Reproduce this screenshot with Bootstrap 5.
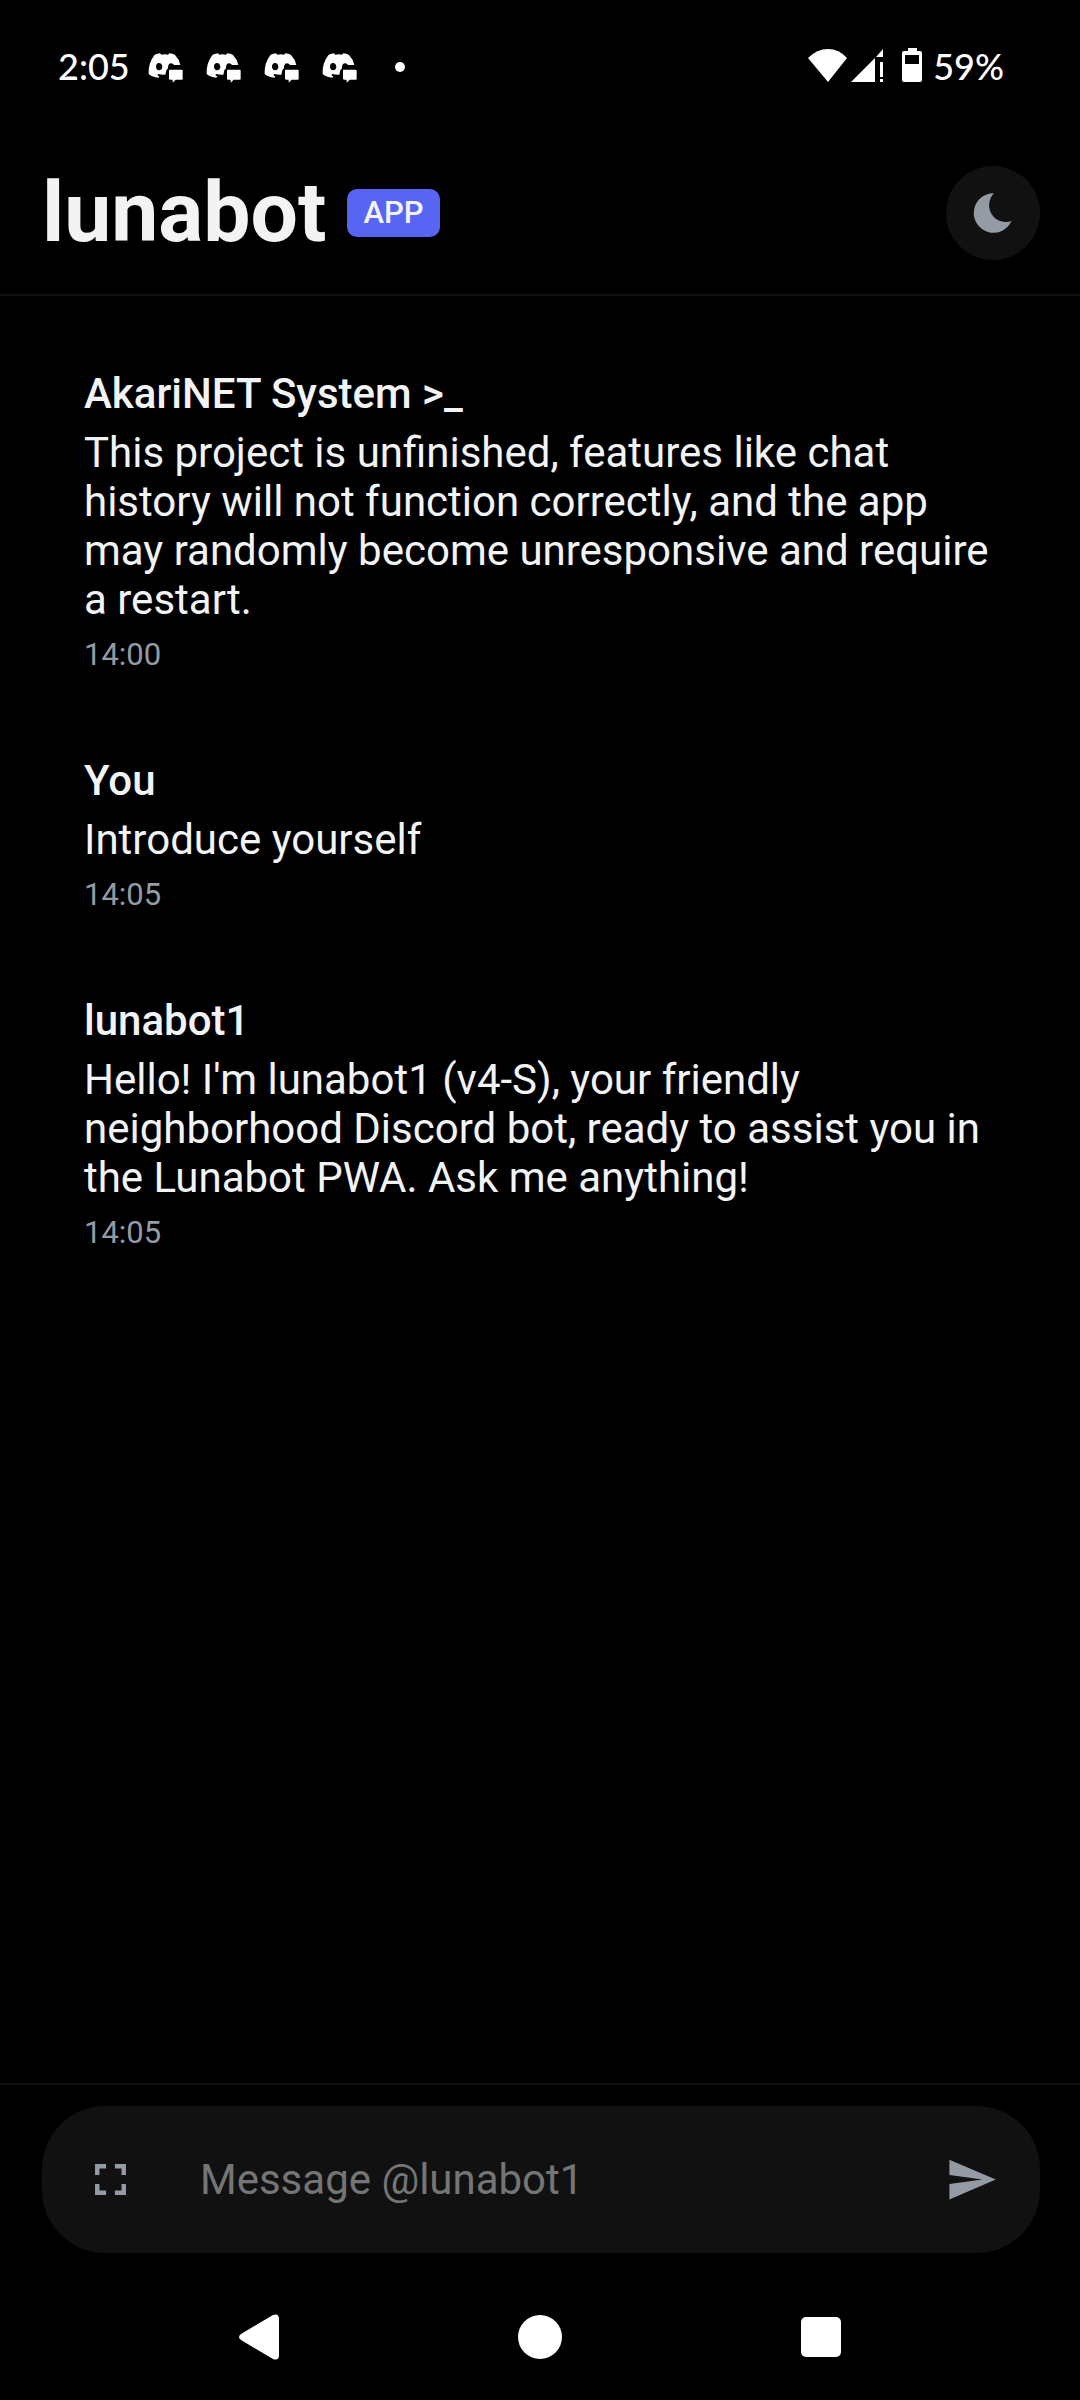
<!DOCTYPE html>
<html lang="en">
<head>
<meta charset="utf-8">
<meta name="viewport" content="width=device-width, initial-scale=1">
<title>lunabot</title>
<link href="https://cdn.jsdelivr.net/npm/bootstrap@5.3.0/dist/css/bootstrap.min.css" rel="stylesheet">
<style>
  body { background: #000; color: #f2f3f5; font-family: Roboto, sans-serif; font-size: 42px; line-height: 49px; }
  svg { display: block; fill: currentColor; }
  .status-bar { height: 132px; padding: 0 76px 0 58px; color: #fff; font-family: Lato, sans-serif; font-size: 36px; line-height: 44px; font-weight: 500; }
  .notices { gap: 23px; margin-left: 18px; }
  .app-header { padding: 32px 40px 32px 42px; border-bottom: 2px solid #111; }
  .app-title { font-size: 84px; line-height: 98px; font-weight: 700; }
  .app-tag { background: #5865f2; color: #f2f3f5; font-size: 31px; line-height: 48px; font-weight: 500; padding: 0 16px; border-radius: 10px; margin-left: 21px; }
  .plain-btn { background: none; border: 0; padding: 0; color: #949ba4; }
  .theme-btn { background: #111; width: 94px; height: 94px; }
  .chat-log { padding: 73px 84px; gap: 83px; }
  .sender { font-size: 42px; line-height: 49px; font-weight: 500; margin-bottom: 10px; }
  .stamp { font-size: 31px; line-height: 37px; color: #949ba4; margin-top: 12px; }
  .app-footer { padding: 21px 40px 21px 42px; border-top: 2px solid #111; }
  .composer { background: #111; border-radius: 63px; height: 147px; padding: 0 42px 1px; }
  .composer-input { background: none; border: 0; outline: 0; color: #f2f3f5; padding: 0; margin: 0 63px; min-width: 0; line-height: 49px; }
  .composer-input::placeholder { color: #757575; opacity: 1; }
  .system-nav { height: 126px; gap: 236px; }
  .system-nav .plain-btn { color: #fff; }
</style>
</head>
<body class="d-flex flex-column min-vh-100">
<svg class="d-none" aria-hidden="true">
  <symbol id="discord" viewBox="0 -12 105 102">
    <path fill-rule="evenodd" d="M20 5 Q28 2 36 1 L40 5 Q50 3 60 5 L64 1 Q74 2 81 6 Q93 18 97 36 L78 36 Q75 31 69 31 Q61 32 60 42 L60 46 L55 52 L52 65 Q42 66 31 63 L28 66 L34 71 L31 74 Q13 73 2 63 Q0 30 20 5 Z M33 30 Q24 31 24 41 Q25 51 33 52 Q43 51 43 41 Q42 31 33 30 Z"/>
    <path d="M64 50 H101 Q104 50 104 53 V77 Q104 80 101 80 H83 L74 89 V80 H67 Q63 80 63 77 V53 Q63 50 64 50 Z"/>
  </symbol>
</svg>

<div class="status-bar d-flex align-items-center justify-content-between">
  <div class="d-flex align-items-center">
    <span>2:05</span>
    <div class="notices d-flex align-items-center">
      <svg width="35" height="34"><use href="#discord"/></svg>
      <svg width="35" height="34"><use href="#discord"/></svg>
      <svg width="35" height="34"><use href="#discord"/></svg>
      <svg width="35" height="34"><use href="#discord"/></svg>
      <svg width="35" height="12" viewBox="0 0 35 12"><circle cx="20" cy="7" r="5"/></svg>
    </div>
  </div>
  <div class="d-flex align-items-center">
    <svg width="117" height="36" viewBox="0 0 117 36">
      <path d="M0 10 Q9 1 20 1 T39 10 L20 34 Z"/>
      <path d="M43 34 L67 10 V34 Z M68 9 L75 1 V9 Z M72 14 H75 V29 H72 Z M72 31 H75 V34 H72 Z"/>
      <path fill-rule="evenodd" d="M100 0 H109 V3 H112 Q114 3 114 5 V32 Q114 34 112 34 H96 Q94 34 94 32 V5 Q94 3 96 3 H100 Z M97 7 V16 H111 V7 Z"/>
    </svg>
    <span class="ps-2">59%</span>
  </div>
</div>

<header class="app-header d-flex align-items-center">
  <h1 class="app-title mb-0">lunabot</h1>
  <span class="app-tag">APP</span>
  <button type="button" class="plain-btn theme-btn rounded-circle ms-auto" aria-label="Toggle theme">
    <svg width="94" height="94" viewBox="0 0 94 94"><path d="M48 27.3 A19.7 19.7 0 1 0 65.5 55 A16.8 16.8 0 0 1 48 27.3 Z"/></svg>
  </button>
</header>

<main class="chat-log d-flex flex-column flex-grow-1">
  <article>
    <h2 class="sender">AkariNET System &gt;_</h2>
    <p class="mb-0">This project is unfinished, features like chat history will not function correctly, and the app may randomly become unresponsive and require a restart.</p>
    <time class="stamp d-block">14:00</time>
  </article>
  <article>
    <h2 class="sender">You</h2>
    <p class="mb-0">Introduce yourself</p>
    <time class="stamp d-block">14:05</time>
  </article>
  <article>
    <h2 class="sender">lunabot1</h2>
    <p class="mb-0">Hello! I'm lunabot1 (v4-S), your friendly neighborhood Discord bot, ready to assist you in the Lunabot PWA. Ask me anything!</p>
    <time class="stamp d-block">14:05</time>
  </article>
</main>

<footer class="app-footer">
  <form class="composer d-flex align-items-center">
    <button type="button" class="plain-btn" aria-label="Full screen">
      <svg width="53" height="53" viewBox="0 0 24 24"><path d="M7 14H5v5h5v-2H7v-3zm-2-4h2V7h3V5H5v5zm12 7h-3v2h5v-5h-2v3zM14 5v2h3v3h2V5h-5z"/></svg>
    </button>
    <input type="text" class="composer-input flex-grow-1" placeholder="Message @lunabot1" aria-label="Message">
    <button type="button" class="plain-btn" aria-label="Send">
      <svg width="53" height="53" viewBox="0 0 24 24"><path d="M2 21 L23 12 2 3 V10 L17 12 2 14 Z"/></svg>
    </button>
  </form>
</footer>

<nav class="system-nav d-flex align-items-center justify-content-center" aria-label="System">
  <button type="button" class="plain-btn" aria-label="Back">
    <svg width="45" height="46" viewBox="0 0 45 46"><path d="M36 1 Q42 -1 42 5 V41 Q42 47 36 45 L4 26 Q0 23 4 20 Z"/></svg>
  </button>
  <button type="button" class="plain-btn" aria-label="Home">
    <svg width="45" height="46" viewBox="0 0 45 46"><circle cx="22" cy="23" r="22"/></svg>
  </button>
  <button type="button" class="plain-btn" aria-label="Recents">
    <svg width="45" height="46" viewBox="0 0 45 46"><rect x="2" y="3" width="40" height="40" rx="5"/></svg>
  </button>
</nav>
<script src="https://cdn.jsdelivr.net/npm/bootstrap@5.3.0/dist/js/bootstrap.bundle.min.js"></script>
</body>
</html>
